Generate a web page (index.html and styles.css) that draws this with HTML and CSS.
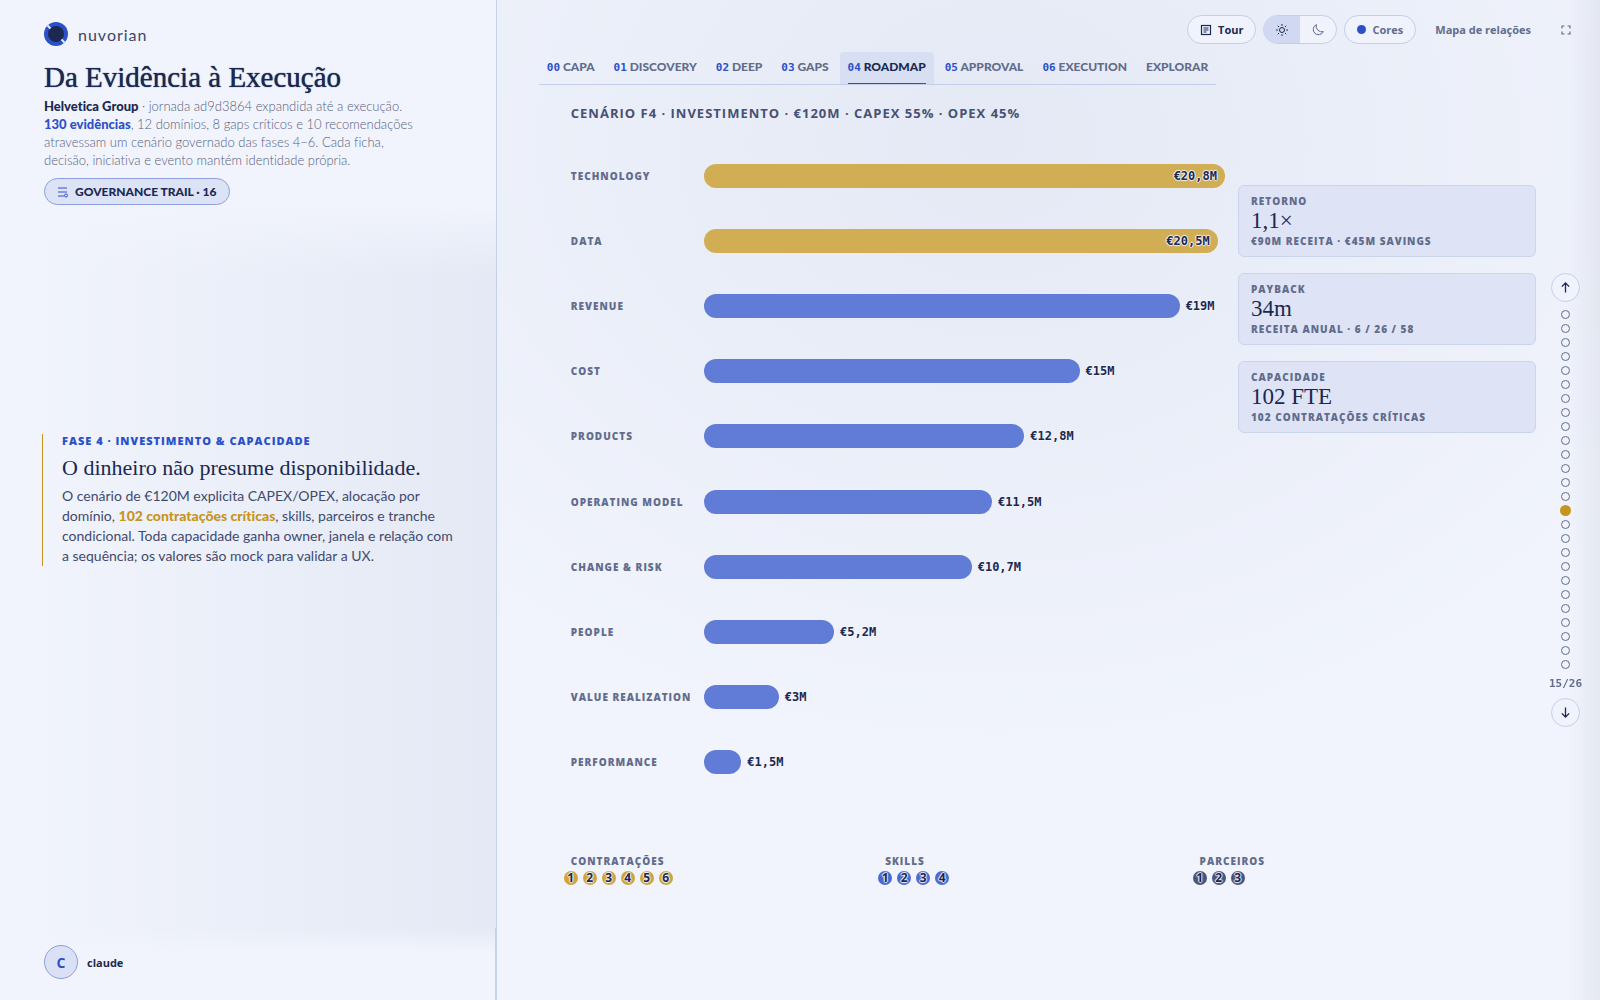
FILE: index.html
```html
<!DOCTYPE html>
<html lang="pt-BR">
<head>
    <meta charset="UTF-8">
    <meta name="viewport" content="width=device-width, initial-scale=1.0">
    <title>Da Evidência à Execução</title>
    <link rel="stylesheet" href="styles.css">
</head>
<body>
    <aside class="side">
        <header class="side-head">
            <div class="brand">
                <svg width="24" height="24" viewBox="0 0 24 24" aria-hidden="true">
                    <circle cx="12" cy="12" r="12" fill="#2c50c8"/>
                    <circle cx="12" cy="12" r="8" fill="#1b2850"/>
                    <path d="M3.5 3.5l3 3M17.5 17.5l3 3" stroke="#e6ecfb" stroke-width="2"/>
                </svg>
                <span>nuvorian</span>
            </div>
            <h1>Da Evidência à Execução</h1>
            <p class="intro"><strong>Helvetica Group</strong> · jornada ad9d3864 expandida até a execução.<br>
                <strong class="blue">130 evidências</strong>, 12 domínios, 8 gaps críticos e 10 recomendações<br>
                atravessam um cenário governado das fases 4–6. Cada ficha,<br>
                decisão, iniciativa e evento mantém identidade própria.</p>
            <button class="trail" type="button">
                <svg width="12" height="12" viewBox="0 0 12 12" fill="none" stroke="#2c50c8" aria-hidden="true">
                    <path d="M1 2h9M1 6h9M1 10h6"/>
                    <circle cx="9" cy="9.5" r="1.5"/>
                </svg>
                GOVERNANCE TRAIL · 16
            </button>
        </header>

        <section class="story">
            <p class="kicker">FASE 4 · INVESTIMENTO &amp; CAPACIDADE</p>
            <h2>O dinheiro não presume disponibilidade.</h2>
            <p class="story-text">O cenário de €120M explicita CAPEX/OPEX, alocação por<br>
                domínio, <strong>102 contratações críticas</strong>, skills, parceiros e tranche<br>
                condicional. Toda capacidade ganha owner, janela e relação com<br>
                a sequência; os valores são mock para validar a UX.</p>
        </section>

        <footer class="user">
            <span class="avatar">C</span>
            <strong>claude</strong>
        </footer>
    </aside>

    <main class="stage">
        <div class="toolbar">
            <button class="pill dark" type="button">
                <svg width="12" height="12" viewBox="0 0 12 12" fill="none" stroke="currentColor" stroke-width="1.2" aria-hidden="true">
                    <rect x="1.5" y="1.5" width="9" height="9"/>
                    <path d="M3.5 4h5M3.5 6h5M3.5 8h3"/>
                </svg>
                Tour
            </button>
            <div class="theme">
                <button class="on" type="button" aria-label="Tema claro">
                    <svg width="14" height="14" viewBox="0 0 14 14" fill="none" stroke="currentColor" aria-hidden="true">
                        <circle cx="7" cy="7" r="2.5"/>
                        <path d="M7 1v1.8M7 11.2V13M1 7h1.8M11.2 7H13M2.8 2.8l1.2 1.2M10 10l1.2 1.2M2.8 11.2L4 10M10 4l1.2-1.2"/>
                    </svg>
                </button>
                <button type="button" aria-label="Tema escuro">
                    <svg width="14" height="14" viewBox="0 0 14 14" fill="none" stroke="currentColor" aria-hidden="true">
                        <path d="M5.4 1.6A5.3 5.3 0 1 0 12.4 8.6 5.6 5.6 0 0 1 5.4 1.6z"/>
                    </svg>
                </button>
            </div>
            <button class="pill" type="button"><i class="swatch"></i>Cores</button>
            <a class="map-link" href="#mapa">Mapa de relações</a>
            <button class="expand" type="button" aria-label="Tela cheia">
                <svg width="10" height="10" viewBox="0 0 10 10" fill="none" stroke="currentColor" stroke-width="1.2" aria-hidden="true">
                    <path d="M1 3.5V1h2.5M6.5 1H9v2.5M9 6.5V9H6.5M3.5 9H1V6.5"/>
                </svg>
            </button>
        </div>

        <nav class="tabs">
            <a href="#capa"><b>00</b> CAPA</a>
            <a href="#discovery"><b>01</b> DISCOVERY</a>
            <a href="#deep"><b>02</b> DEEP</a>
            <a href="#gaps"><b>03</b> GAPS</a>
            <a href="#roadmap" class="active"><span><b>04</b> ROADMAP</span></a>
            <a href="#approval"><b>05</b> APPROVAL</a>
            <a href="#execution"><b>06</b> EXECUTION</a>
            <a href="#explorar">EXPLORAR</a>
        </nav>

        <h3 class="scene-title">CENÁRIO F4 · INVESTIMENTO · €120M · CAPEX 55% · OPEX 45%</h3>

        <div class="board">
            <div class="chart">
                <div class="row"><span class="name">TECHNOLOGY</span><div class="track"><div class="bar gold" style="width: 100%"><span class="value">€20,8M</span></div></div></div>
                <div class="row"><span class="name">DATA</span><div class="track"><div class="bar gold" style="width: 98.6%"><span class="value">€20,5M</span></div></div></div>
                <div class="row"><span class="name">REVENUE</span><div class="track"><div class="bar" style="width: 91.3%"></div><span class="value">€19M</span></div></div>
                <div class="row"><span class="name">COST</span><div class="track"><div class="bar" style="width: 72.1%"></div><span class="value">€15M</span></div></div>
                <div class="row"><span class="name">PRODUCTS</span><div class="track"><div class="bar" style="width: 61.5%"></div><span class="value">€12,8M</span></div></div>
                <div class="row"><span class="name">OPERATING MODEL</span><div class="track"><div class="bar" style="width: 55.3%"></div><span class="value">€11,5M</span></div></div>
                <div class="row"><span class="name">CHANGE &amp; RISK</span><div class="track"><div class="bar" style="width: 51.4%"></div><span class="value">€10,7M</span></div></div>
                <div class="row"><span class="name">PEOPLE</span><div class="track"><div class="bar" style="width: 25%"></div><span class="value">€5,2M</span></div></div>
                <div class="row"><span class="name">VALUE REALIZATION</span><div class="track"><div class="bar" style="width: 14.4%"></div><span class="value">€3M</span></div></div>
                <div class="row"><span class="name">PERFORMANCE</span><div class="track"><div class="bar" style="width: 7.2%"></div><span class="value">€1,5M</span></div></div>
            </div>

            <div class="cards">
                <div class="card">
                    <span class="label">RETORNO</span>
                    <span class="number">1,1×</span>
                    <span class="label">€90M RECEITA · €45M SAVINGS</span>
                </div>
                <div class="card">
                    <span class="label">PAYBACK</span>
                    <span class="number">34m</span>
                    <span class="label">RECEITA ANUAL · 6 / 26 / 58</span>
                </div>
                <div class="card">
                    <span class="label">CAPACIDADE</span>
                    <span class="number">102 FTE</span>
                    <span class="label">102 CONTRATAÇÕES CRÍTICAS</span>
                </div>
            </div>
        </div>

        <div class="groups">
            <div class="group gold">
                <span class="label">CONTRATAÇÕES</span>
                <div class="chips"><span>1</span><span>2</span><span>3</span><span>4</span><span>5</span><span>6</span></div>
            </div>
            <div class="group">
                <span class="label">SKILLS</span>
                <div class="chips"><span>1</span><span>2</span><span>3</span><span>4</span></div>
            </div>
            <div class="group navy">
                <span class="label">PARCEIROS</span>
                <div class="chips"><span>1</span><span>2</span><span>3</span></div>
            </div>
        </div>
    </main>

    <!-- navegação entre cenas -->
    <nav class="rail" aria-label="Cenas">
        <button class="arrow" type="button" aria-label="Anterior">
            <svg width="11" height="11" viewBox="0 0 11 11" fill="none" stroke="currentColor" stroke-width="1.3" aria-hidden="true"><path d="M5.5 10.5V1M1.8 4.6L5.5 1l3.7 3.6"/></svg>
        </button>
        <div class="dots" id="dots"></div>
        <span class="count">15/26</span>
        <button class="arrow" type="button" aria-label="Próxima">
            <svg width="11" height="11" viewBox="0 0 11 11" fill="none" stroke="currentColor" stroke-width="1.3" aria-hidden="true"><path d="M5.5 .5V10M1.8 6.4L5.5 10l3.7-3.6"/></svg>
        </button>
    </nav>

    <script>
        const dots = document.getElementById('dots');
        const total = 26;
        const current = 15;

        for (let i = 1; i <= total; i++) {
            const dot = document.createElement('button');
            dot.type = 'button';
            dot.setAttribute('aria-label', 'Cena ' + i);
            if (i === current) {
                dot.className = 'current';
            }
            dots.appendChild(dot);
        }
    </script>
</body>
</html>
```

FILE: styles.css
```css
*, *::before {
    box-sizing: border-box;
}

body {
    margin: 0;
    min-height: 100vh;
    display: grid;
    grid-template-columns: 31.05% minmax(0, 1fr);
    background-color: #f1f4fc;
    color: #1b2850;
    font-family: Lato, "Open Sans", sans-serif;
    font-size: 13px;
    font-variant-ligatures: none;
}

h1, h2, h3, p {
    margin: 0;
}

h1, h2, .number {
    font-family: "Liberation Serif", serif;
    font-weight: 400;
}

button {
    padding: 0;
    border: none;
    background: none;
    color: inherit;
    font: inherit;
    cursor: pointer;
}

a {
    color: inherit;
    text-decoration: none;
}

/* painel esquerdo */
.side {
    display: grid;
    grid-template-rows: 1fr auto 1fr;
    border-right: 1px solid #c6d0e6;
    background: linear-gradient(90deg, #f1f4fc 5%, #e4e9f5);
}

.side-head {
    align-self: start;
    padding: 22px 44px 70px;
    background: linear-gradient(#f1f4fc 74%, rgba(241, 244, 252, 0));
}

.brand {
    display: flex;
    align-items: center;
    gap: 10px;
    height: 24px;
    color: #3b4668;
    font-size: 16px;
    letter-spacing: 1px;
}

h1 {
    margin-top: 15px;
    font-size: 29px;
    line-height: 32px;
    text-shadow: 0 0 1px #1b2850;
}

.intro {
    margin-top: 4px;
    color: #56607f;
    font-size: 13px;
    font-weight: 300;
    line-height: 18px;
    white-space: nowrap;
}

.intro strong {
    color: #1b2850;
    font-weight: 900;
}

.intro .blue {
    color: #2c50c8;
}

.trail {
    display: flex;
    align-items: center;
    gap: 6px;
    height: 27px;
    margin-top: 9px;
    padding: 0 12px;
    border: 1px solid #8d9fdc;
    border-radius: 14px;
    background-color: #dde3f6;
    font-size: 12px;
    font-weight: 900;
}

.story {
    margin-left: 42px;
    padding-left: 19px;
    border-left: 1px solid #c6951f;
    white-space: nowrap;
}

.kicker {
    color: #2c50c8;
    font-family: "Open Sans", sans-serif;
    font-size: 11px;
    font-weight: 800;
    line-height: 14px;
    letter-spacing: 1px;
}

h2 {
    margin-top: 6px;
    font-size: 22px;
    line-height: 28px;
}

.story-text {
    margin-top: 4px;
    color: #3f4a6d;
    font-size: 14px;
    line-height: 20px;
}

.story-text strong {
    color: #c6951f;
    font-weight: 900;
}

.user {
    align-self: end;
    display: flex;
    align-items: center;
    gap: 9px;
    height: 72px;
    padding: 0 44px 4px;
    border-right: 1px solid #c6d0e6;
    background: linear-gradient(rgba(241, 244, 252, 0), #f1f4fc 24px);
    font-family: "Open Sans", sans-serif;
    font-size: 11px;
}

.avatar {
    display: grid;
    place-items: center;
    width: 34px;
    height: 34px;
    border: 1px solid #8d9fdc;
    border-radius: 50%;
    background-color: #dae1f6;
    color: #2c50c8;
    font-size: 14px;
    font-weight: 700;
}

/* área principal */
.stage {
    display: flex;
    flex-direction: column;
    padding: 15px 0 115px;
    background:
        linear-gradient(270deg, rgba(30, 45, 90, 0.06), rgba(30, 45, 90, 0) 32px),
        radial-gradient(ellipse 70% 62% at 45% 14%, #e4e9f5, rgba(228, 233, 245, 0));
}

.toolbar {
    display: flex;
    justify-content: flex-end;
    align-items: center;
    gap: 7px;
    padding-right: 18px;
    color: #626c8c;
    font-family: "Open Sans", sans-serif;
    font-size: 11px;
    font-weight: 700;
}

.pill {
    display: flex;
    align-items: center;
    gap: 6px;
    height: 29px;
    padding: 0 12px;
    border: 1px solid #c5cee8;
    border-radius: 15px;
    background-color: #f0f3fc;
}

.dark {
    color: #1b2850;
}

.swatch {
    width: 9px;
    height: 9px;
    border-radius: 50%;
    background-color: #2c50c8;
}

.theme {
    display: flex;
    height: 29px;
    border: 1px solid #c5cee8;
    border-radius: 15px;
    background-color: #f0f3fc;
    overflow: hidden;
}

.theme button {
    display: grid;
    place-items: center;
    width: 36px;
}

.theme .on {
    background-color: #d0d8f2;
    color: #1b2850;
}

.map-link {
    padding: 0 12px;
}

.expand {
    display: grid;
    place-items: center;
    width: 32px;
    height: 29px;
}

.tabs {
    display: flex;
    align-self: flex-start;
    gap: 3px;
    margin: 8px 0 0 42px;
    border-bottom: 1px solid #c3cde8;
    color: #626c8c;
    font-size: 12px;
    font-weight: 900;
    line-height: 30px;
    white-space: nowrap;
}

.tabs a {
    height: 32px;
    padding: 0 8px;
}

.tabs b {
    color: #2c50c8;
    font-family: "DejaVu Sans Mono", monospace;
    font-size: 11px;
    font-weight: 700;
}

.tabs .active {
    border-radius: 4px 4px 0 0;
    background-color: #d8dff3;
    color: #1b2850;
}

.active span {
    display: block;
    border-bottom: 1px solid #2c50c8;
    height: 32px;
}

.scene-title {
    margin: 18px 0 20px 74px;
    color: #475173;
    font-family: "Open Sans", sans-serif;
    font-size: 13px;
    font-weight: 700;
    line-height: 20px;
    letter-spacing: 1px;
}

.board {
    flex: 1;
    display: grid;
    grid-template-columns: minmax(0, 1fr) 298px;
    gap: 13px;
    padding: 0 64px 0 74px;
}

.chart {
    display: grid;
    grid-auto-rows: 1fr;
}

.row {
    display: grid;
    grid-template-columns: 133px minmax(0, 1fr);
    align-items: center;
}

.name, .label {
    color: #626c8c;
    font-family: "Open Sans", sans-serif;
    font-size: 10px;
    font-weight: 800;
    letter-spacing: 1px;
    white-space: nowrap;
}

.track {
    display: flex;
    align-items: center;
    gap: 6px;
}

.bar {
    display: flex;
    justify-content: flex-end;
    align-items: center;
    height: 24px;
    padding-right: 8px;
    border-radius: 12px;
    background-color: #617cd6;
}

.bar.gold {
    background-color: #d1ad54;
}

.value {
    font-family: "DejaVu Sans Mono", monospace;
    font-size: 12px;
    font-weight: 700;
    text-shadow: 1px 0 1px #f1f4fc, -1px 0 1px #f1f4fc, 0 1px 1px #f1f4fc, 0 -1px 1px #f1f4fc;
}

.cards {
    display: flex;
    flex-direction: column;
    gap: 16px;
    padding-top: 42px;
}

.card {
    display: flex;
    flex-direction: column;
    padding: 9px 12px;
    border: 1px solid #cbd5ea;
    border-radius: 6px;
    background-color: #dee4f5;
}

.card .label {
    line-height: 12px;
}

.number {
    font-size: 23px;
    line-height: 28px;
}

.groups {
    display: grid;
    grid-template-columns: repeat(3, 1fr);
    margin-top: 59px;
    padding: 0 93px 0 67px;
}

.group .label {
    display: block;
    padding-left: 7px;
    line-height: 14px;
}

.chips {
    display: flex;
    gap: 5px;
    margin-top: 3px;
}

.chips span {
    width: 14px;
    height: 14px;
    border-radius: 50%;
    background-color: #4a6ad0;
    font-family: "Open Sans", sans-serif;
    font-size: 12px;
    font-weight: 700;
    line-height: 13px;
    text-align: center;
    text-shadow: 1px 0 1px #f1f4fc, -1px 0 1px #f1f4fc, 0 1px 1px #f1f4fc, 0 -1px 1px #f1f4fc;
}

.gold .chips span {
    background-color: #cfa43c;
}

.navy .chips span {
    background-color: #49557f;
}

/* trilho de cenas, sobreposto à direita */
.rail {
    position: fixed;
    top: 0;
    right: 18px;
    bottom: 0;
    display: flex;
    flex-direction: column;
    justify-content: center;
    align-items: center;
    width: 33px;
}

.arrow {
    display: grid;
    place-items: center;
    width: 29px;
    height: 29px;
    border: 1px solid #c5cee8;
    border-radius: 50%;
    background-color: #f0f3fc;
}

.dots {
    display: flex;
    flex-direction: column;
    align-items: center;
    margin: 5px 0 6px;
}

.dots button {
    display: grid;
    place-items: center;
    width: 14px;
    height: 14px;
}

.dots button::before {
    content: "";
    width: 9px;
    height: 9px;
    border: 1px solid #626c8c;
    border-radius: 50%;
}

.dots .current::before {
    width: 11px;
    height: 11px;
    border: none;
    background-color: #c6951f;
}

.count {
    margin-bottom: 7px;
    color: #626c8c;
    font-family: "DejaVu Sans Mono", monospace;
    font-size: 11px;
    font-weight: 700;
    line-height: 14px;
}
```
